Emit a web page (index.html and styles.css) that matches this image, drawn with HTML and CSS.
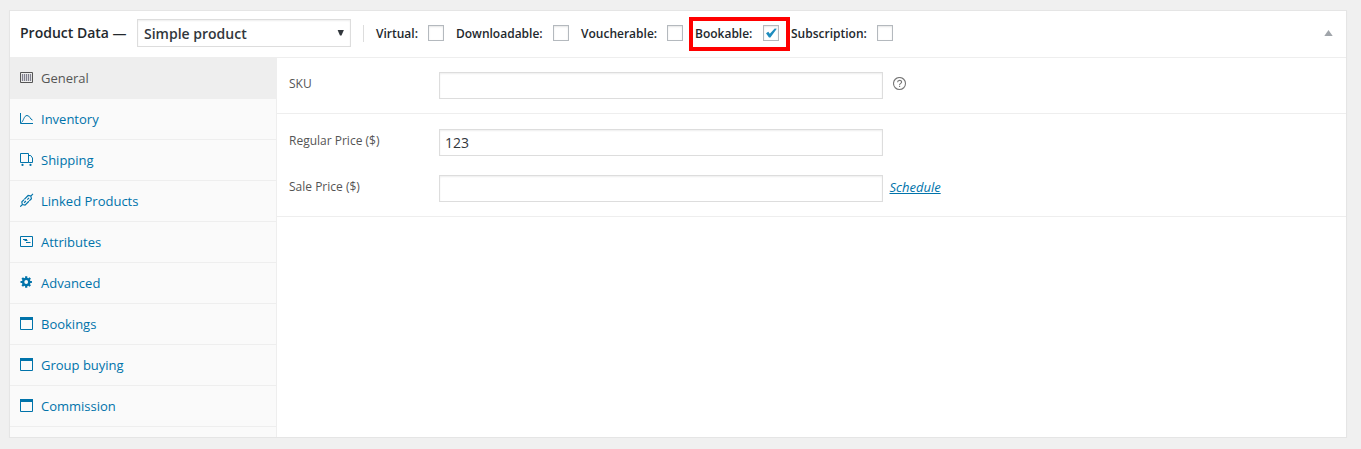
FILE: index.html
```html
<!DOCTYPE html>
<html lang="en">
<head>
<meta charset="utf-8">
<title>Product Data</title>
<link rel="stylesheet" href="styles.css">
</head>
<body>
<section class="panel">
  <header class="head">
    <h2 class="title">Product Data —</h2>
    <div class="select"><span>Simple product</span><svg width="8" height="8" viewBox="0 0 8 8"><path d="M.6 1h6.300L4.500 6.400H3z" fill="#32373c"/></svg></div>
    <div class="options">
      <label class="opt virtual">Virtual:<span class="box"></span></label>
      <label class="opt downloadable">Downloadable:<span class="box"></span></label>
      <label class="opt voucherable">Voucherable:<span class="box"></span></label>
      <label class="opt bookable">Bookable:<span class="box"><svg width="14" height="14" viewBox="0 0 14 14"><path d="M2 7.200l2.300-1.400 1.500 1.900L10.700 2.500l2.100.3-6.400 8.600H5z" fill="#1e8cbe"/></svg></span></label>
      <label class="opt subscription">Subscription:<span class="box"></span></label>
    </div>
    <svg class="toggle" width="9" height="7" viewBox="0 0 9 7"><path d="M4.500 0L8.700 6H.3z" fill="#a0a5aa"/></svg>
  </header>
  <div class="body">
    <ul class="tabs">
      <li class="tab active"><svg class="icon" viewBox="0 0 14 14"><path d="M.5 2.500h12v10h-12z" fill="none" stroke="currentColor"/><path d="M2.500 4v7M4.500 4v7M6.500 4v7M8.500 4v7M10.500 4v7" stroke="#667" stroke-width="1.200" opacity=".8"/></svg>General</li>
      <li class="tab"><svg class="icon" viewBox="0 0 14 14"><path d="M.5 2v10.500H13M1.500 11.500c2-1.500 2.500-7 5.500-7s3 4 5.500 4.500" fill="none" stroke="currentColor"/></svg>Inventory</li>
      <li class="tab"><svg class="icon" viewBox="0 0 14 14"><path d="M.5 1.500h8v9h-8zM8.500 3.500h2.200l1.800 2.500v4.500h-4" fill="none" stroke="currentColor"/><circle cx="2.500" cy="12.900" r="1.100" fill="currentColor"/><circle cx="10.500" cy="12.900" r="1.100" fill="currentColor"/></svg>Shipping</li>
      <li class="tab"><svg class="icon" viewBox="0 0 14 14"><g transform="translate(6.600 7.300) rotate(-45)" fill="none" stroke="currentColor" stroke-width="1.150"><path d="M-1.500-2.300h-3L-6 0l1.500 2.300h5.500M1.500 2.300h3L6 0 4.500-2.300H-1M-9 0h3M6 0h3M-3.500 0h2.500M1 0h2.500"/></g></svg>Linked Products</li>
      <li class="tab"><svg class="icon" viewBox="0 0 14 14"><path d="M.5 2.500h12v10h-12z" fill="none" stroke="currentColor"/><path d="M3 5.500h4M4.500 6.500h3M6 8.500h4.500" fill="none" stroke="currentColor" stroke-width="1.200"/></svg>Attributes</li>
      <li class="tab"><svg class="icon" viewBox="0 0 14 14"><circle cx="6.200" cy="7" r="3.100" fill="none" stroke="currentColor" stroke-width="2.400"/><path d="M6.200 1.300v2M6.200 10.700v2M.5 7h2M9.900 7h2M2.200 3l1.400 1.400M8.800 9.600l1.400 1.400M10.200 3L8.800 4.400M3.600 9.600l-1.400 1.400" stroke="currentColor" stroke-width="2.200"/></svg>Advanced</li>
      <li class="tab"><svg class="icon" viewBox="0 0 14 14"><path d="M.5 1.500h12v12h-12z" fill="none" stroke="currentColor"/><path d="M0 1h13v3H0z" fill="currentColor"/></svg>Bookings</li>
      <li class="tab"><svg class="icon" viewBox="0 0 14 14"><path d="M.5 1.500h12v12h-12z" fill="none" stroke="currentColor"/><path d="M0 1h13v3H0z" fill="currentColor"/></svg>Group buying</li>
      <li class="tab"><svg class="icon" viewBox="0 0 14 14"><path d="M.5 1.500h12v12h-12z" fill="none" stroke="currentColor"/><path d="M0 1h13v3H0z" fill="currentColor"/></svg>Commission</li>
    </ul>
    <div class="fields">
      <div class="group">
        <div class="row"><label class="name" for="sku">SKU</label><input class="input" id="sku" type="text">
          <svg class="help" width="14" height="14" viewBox="0 0 14 14"><circle cx="6.500" cy="6.500" r="6" fill="none" stroke="#777" stroke-width="1.100"/><path d="M4.600 5.300c0-2.600 4-2.500 4-.3 0 1.400-2 1.300-2 3M6.600 8.800V10" fill="none" stroke="#777" stroke-width="1.100"/></svg>
        </div>
      </div>
      <div class="group prices">
        <div class="row"><label class="name" for="regular">Regular Price ($)</label><input class="input" id="regular" type="text" value="123"></div>
        <div class="row"><label class="name" for="sale">Sale Price ($)</label><input class="input" id="sale" type="text"><a class="schedule" href="#">Schedule</a></div>
      </div>
    </div>
  </div>
</section>
</body>
</html>
```
FILE: styles.css
```css
*, *::before, *::after { box-sizing: border-box; }
body {
  margin: 0;
  padding: 10px 14px 0 9px;
  background: #f0f0f0;
  color: #23282d;
  font: 13px/18px "Open Sans", sans-serif;
  overflow: hidden;
}
.panel {
  height: 428px;
  display: flex;
  flex-direction: column;
  background: #fff;
  border: 1px solid #e5e5e5;
  box-shadow: 0 1px 1px rgba(0, 0, 0, .04);
}
.head {
  height: 47px;
  flex: none;
  display: flex;
  align-items: flex-start;
  padding: 8px 13px 0 10px;
  border-bottom: 1px solid #eee;
}
.title {
  width: 117px;
  margin: 4px 0 0;
  font-size: 14px;
  line-height: 20px;
  font-weight: 600;
  white-space: nowrap;
}
.select {
  width: 214px;
  height: 28px;
  display: flex;
  align-items: center;
  justify-content: space-between;
  padding: 1px 5px 0 6px;
  border: 1px solid #ddd;
  box-shadow: inset 0 1px 2px rgba(0, 0, 0, .07);
  color: #32373c;
  font-size: 14px;
  font-weight: 600;
}
.select svg { margin-top: -1px; }
.options {
  display: flex;
  gap: 12px;
  height: 17px;
  margin: 6px 0 0 12px;
  padding-left: 12px;
  border-left: 1px solid #ddd;
  font-size: 12px;
  font-weight: 600;
  line-height: 17px;
}
.opt {
  position: relative;
  display: flex;
  justify-content: space-between;
  white-space: nowrap;
}
.virtual { width: 68px; }
.downloadable { width: 113px; }
.voucherable, .subscription { width: 102px; }
.bookable { width: 84px; }
.bookable::after {
  content: "";
  position: absolute;
  left: -6px;
  top: -8px;
  width: 101px;
  height: 34px;
  border: 4px solid #f00;
}
.box {
  width: 16px;
  height: 16px;
  border: 1px solid #b4b9be;
  box-shadow: inset 0 1px 2px rgba(0, 0, 0, .1);
}
.box svg { display: block; }
.toggle { margin: 11px 0 0 auto; }
.body { flex: 1; display: flex; min-height: 0; }
.tabs {
  width: 267px;
  margin: 0;
  padding: 0;
  list-style: none;
  background: #fafafa;
  border-right: 1px solid #eee;
}
.tab {
  height: 41px;
  display: flex;
  align-items: center;
  gap: 7px;
  padding-left: 10px;
  border-bottom: 1px solid #eee;
  color: #0073aa;
}
.tab.active { background: #eee; color: #555; }
.icon { width: 14px; height: 14px; margin-top: -2px; }
.fields { flex: 1; color: #555; font-size: 12px; }
.group { padding: 14px 0 14px 12px; border-bottom: 1px solid #eee; }
.prices { padding-top: 15px; display: grid; gap: 19px; }
.row { display: flex; height: 27px; }
.name { width: 150px; padding-top: 3px; }
.input {
  width: 444px;
  height: 27px;
  margin: 0;
  padding: 0 5px 1px;
  border: 1px solid #ddd;
  box-shadow: inset 0 1px 2px rgba(0, 0, 0, .07);
  color: #32373c;
  font: 14px "Open Sans", sans-serif;
}
.help { margin: 5px 0 0 10px; }
.schedule {
  margin: 3px 0 0 6.5px;
  color: #0073aa;
  font-size: 13px;
  font-style: italic;
}
```
